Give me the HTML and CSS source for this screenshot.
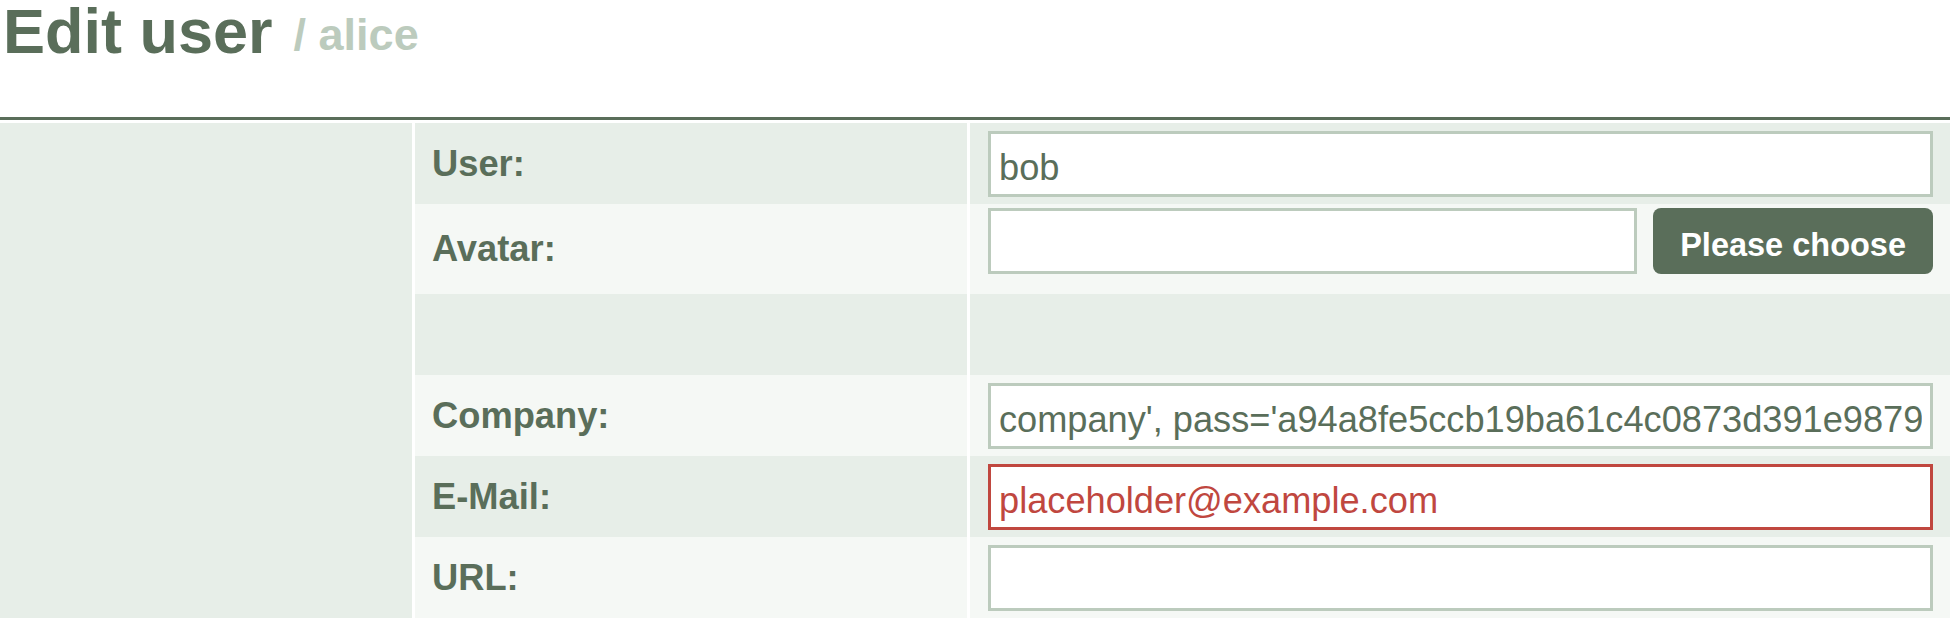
FILE: index.html
```html
<!DOCTYPE html>
<html lang="en">
<head>
<meta charset="utf-8">
<title>Edit user</title>
<link rel="stylesheet" href="styles.css">
</head>
<body>
<header class="page-head">
  <h1 class="title">Edit user<span class="sub">/ alice</span></h1>
</header>
<div class="layout">
  <aside class="sidebar"></aside>
  <form class="form">
    <div class="row dark">
      <label class="label" for="f-user">User:</label>
      <div class="value"><input class="field" id="f-user" type="text" value="bob"></div>
    </div>
    <div class="row light tall">
      <label class="label" for="f-avatar">Avatar:</label>
      <div class="value">
        <input class="field" id="f-avatar" type="text" value="">
        <button class="btn" type="button">Please choose</button>
      </div>
    </div>
    <div class="row dark">
      <div class="label"></div>
      <div class="value"></div>
    </div>
    <div class="row light">
      <label class="label" for="f-company">Company:</label>
      <div class="value"><input class="field" id="f-company" type="text" value="company', pass='a94a8fe5ccb19ba61c4c0873d391e987982fbbd3', mail='"></div>
    </div>
    <div class="row dark">
      <label class="label" for="f-mail">E-Mail:</label>
      <div class="value"><input class="field error" id="f-mail" type="text" value="placeholder@example.com"></div>
    </div>
    <div class="row light">
      <label class="label" for="f-url">URL:</label>
      <div class="value"><input class="field" id="f-url" type="text" value=""></div>
    </div>
  </form>
</div>
</body>
</html>
```

FILE: styles.css
```css
html, body {
  margin: 0;
  padding: 0;
  background: #ffffff;
  overflow: hidden;
}

body {
  font-family: "Liberation Sans", Arial, sans-serif;
  color: #5a6e5a;
}

.page-head {
  height: 117px;
  border-bottom: 3px solid #5a6e5a;
}

.title {
  margin: 0;
  padding-left: 3px;
  font-size: 63px;
  line-height: 62px;
  font-weight: bold;
  color: #5a6e5a;
}

.sub {
  margin-left: 21px;
  font-size: 45px;
  color: #bccbbd;
  vertical-align: 3px;
}

.layout {
  margin-top: 3px;
  display: grid;
  grid-template-columns: 412px 1fr;
  column-gap: 3px;
}

.sidebar {
  background: #e7eee8;
}

.form {
  margin: 0;
  display: flex;
  flex-direction: column;
}

.row {
  display: grid;
  grid-template-columns: 552px 1fr;
  column-gap: 3px;
  height: 81px;
}

.row.tall {
  height: 90px;
}

.row.dark .label,
.row.dark .value {
  background: #e7eee8;
}

.row.light .label,
.row.light .value {
  background: #f5f8f5;
}

.label {
  display: flex;
  align-items: center;
  padding-left: 17px;
  font-size: 36.3px;
  font-weight: bold;
  color: #5a6e5a;
}

.value {
  display: flex;
  align-items: flex-start;
  gap: 16px;
  padding: 8px 17px 0 18px;
}

.row.tall .value {
  padding-top: 4px;
}

.field {
  flex: 1;
  min-width: 0;
  box-sizing: border-box;
  height: 66px;
  margin: 0;
  padding: 12px 8px 4px;
  border: 3px solid #bccbbd;
  border-radius: 0;
  background: #ffffff;
  font-family: "Liberation Sans", Arial, sans-serif;
  font-size: 36.2px;
  color: #5a6e5a;
  outline: none;
}

.field.error {
  border-color: #c0473f;
  color: #c0473f;
}

.btn {
  flex: none;
  box-sizing: border-box;
  height: 66px;
  margin: 0;
  padding: 8px 27px 0;
  border: none;
  border-radius: 8px;
  background: #5a6e5a;
  color: #ffffff;
  font-family: "Liberation Sans", Arial, sans-serif;
  font-size: 32.5px;
  font-weight: bold;
}
```
